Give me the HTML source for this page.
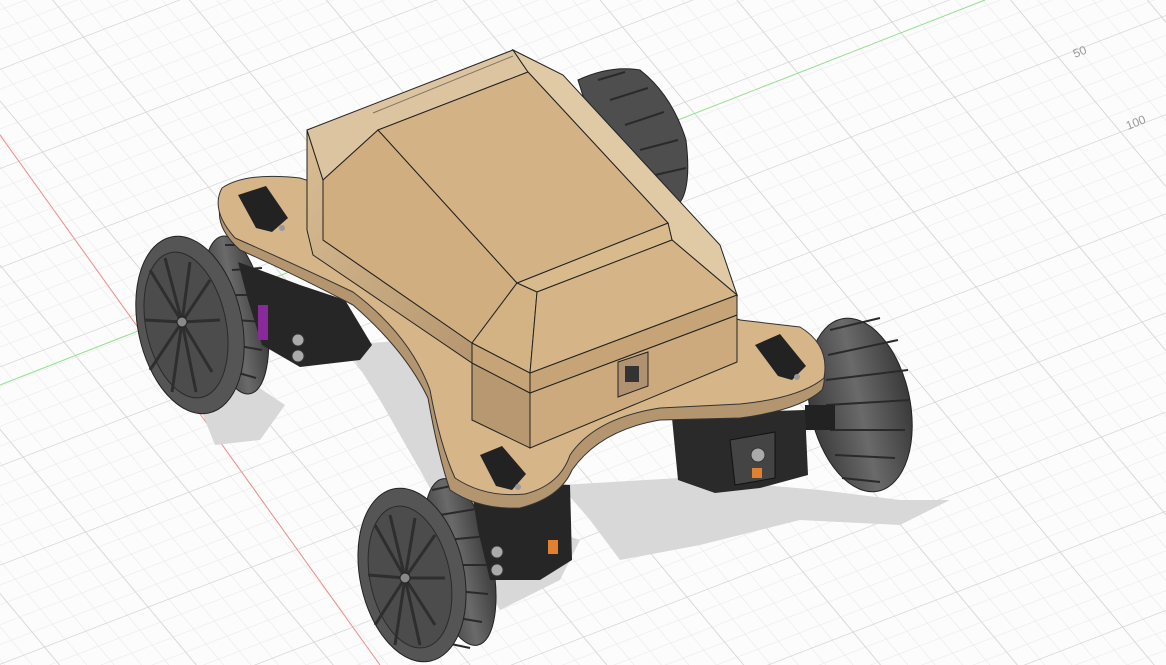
<!DOCTYPE html>
<html><head><style>html,body{margin:0;padding:0;background:#fafafa;overflow:hidden}svg{display:block}</style></head>
<body>
<svg width="1166" height="665" viewBox="0 0 1166 665" xmlns="http://www.w3.org/2000/svg">
<defs>
<pattern id="g" width="1" height="1" patternUnits="userSpaceOnUse" patternTransform="matrix(20.7 -8 12.5 15 913 212)">
<path d="M0 0H1M0 0V1" stroke="#e9e9e9" stroke-width="0.06" fill="none"/>
</pattern>
<pattern id="G" width="5" height="5" patternUnits="userSpaceOnUse" patternTransform="matrix(20.7 -8 12.5 15 913 212)">
<path d="M0 0H5M0 0V5" stroke="#d2d2d2" stroke-width="0.07" fill="none"/>
</pattern>
<linearGradient id="tire" x1="0" y1="0" x2="1" y2="0"><stop offset="0" stop-color="#3c3c3c"/><stop offset="0.5" stop-color="#6a6a6a"/><stop offset="1" stop-color="#3a3a3a"/></linearGradient>
<linearGradient id="lft" x1="0" y1="0" x2="1" y2="1"><stop offset="0" stop-color="#d9bd93"/><stop offset="1" stop-color="#b59670"/></linearGradient>
</defs>
<rect width="1166" height="665" fill="#fcfcfc"/>
<rect width="1166" height="665" fill="url(#g)"/>
<rect width="1166" height="665" fill="url(#G)"/>
<line x1="0" y1="385" x2="985" y2="0" stroke="#8fe08f" stroke-width="1"/>
<line x1="0" y1="135" x2="380" y2="665" stroke="#f08a8a" stroke-width="1"/>
<text x="1075" y="58" font-family="Liberation Sans,sans-serif" font-size="12" fill="#999" transform="rotate(-22 1075 58)">50</text>
<text x="1128" y="130" font-family="Liberation Sans,sans-serif" font-size="12" fill="#999" transform="rotate(-22 1128 130)">100</text>
<g fill="#d8d8d8">
<path d="M195 395 L255 385 L285 405 L260 440 L215 445 Z"/>
<path d="M345 345 L410 340 L440 420 L470 480 L520 520 L580 540 L560 580 L500 610 L470 560 L420 470 L380 400 Z"/>
<path d="M560 485 L680 478 L820 490 L900 500 L950 500 L900 525 L800 520 L700 545 L620 560 L590 520 Z"/>
</g>
<g>
<path d="M578 80 Q610 65 640 70 Q672 95 686 140 Q692 190 678 205 L600 150 Z" fill="#4e4e4e" stroke="#222"/>
<path d="M598 80 L625 72 M610 100 L648 88 M625 125 L664 112 M640 150 L678 140 M655 175 L686 168" stroke="#2a2a2a" stroke-width="2"/>
</g>
<g>
<ellipse cx="236" cy="315" rx="30" ry="80" fill="url(#tire)" stroke="#222" transform="rotate(-10 236 315)"/>
<path d="M225 245 L258 245 M232 270 L262 268 M236 295 L264 295 M236 320 L264 322 M234 345 L262 350 M228 370 L256 378" stroke="#2a2a2a" stroke-width="2"/>
<ellipse cx="190" cy="325" rx="52" ry="90" fill="#555" stroke="#222" transform="rotate(-12 190 325)"/>
<ellipse cx="186" cy="325" rx="40" ry="74" fill="#4c4c4c" stroke="#2a2a2a" transform="rotate(-12 186 325)"/>
<path d="M182 322 L150 270 M182 322 L165 258 M182 322 L190 262 M182 322 L210 280 M182 322 L220 320 M182 322 L212 372 M182 322 L196 392 M182 322 L172 392 M182 322 L150 370 M182 322 L145 320" stroke="#2e2e2e" stroke-width="3"/>
<circle cx="182" cy="322" r="5" fill="#888" stroke="#222"/>
</g>
<path d="M238 262 L300 285 L345 300 L372 345 L360 360 L300 367 L262 345 L248 300 Z" fill="#262626"/>
<rect x="258" y="305" width="10" height="35" fill="#8a2a9a"/>
<circle cx="298" cy="340" r="6" fill="#aaa" stroke="#333"/><circle cx="298" cy="356" r="6" fill="#aaa" stroke="#333"/>
<g>
<ellipse cx="860" cy="405" rx="50" ry="88" fill="url(#tire)" stroke="#222" transform="rotate(-12 860 405)"/>
<path d="M830 330 L880 318 M828 355 L898 340 M826 380 L908 370 M826 405 L910 400 M830 430 L905 430 M835 455 L895 458 M842 478 L880 482" stroke="#2a2a2a" stroke-width="2"/>
<rect x="805" y="405" width="30" height="25" fill="#222"/>
</g>
<path d="M672 418 L745 412 L805 410 L808 475 L760 488 L715 493 L678 480 Z" fill="#2a2a2a"/>
<path d="M730 440 L775 432 L775 478 L735 485 Z" fill="#444" stroke="#111"/>
<circle cx="758" cy="455" r="7" fill="#aaa" stroke="#333"/><rect x="752" y="468" width="10" height="10" fill="#e08030"/>
<g>
<ellipse cx="460" cy="562" rx="32" ry="85" fill="url(#tire)" stroke="#222" transform="rotate(-12 460 562)"/>
<path d="M432 490 L470 482 M440 515 L482 508 M446 540 L488 536 M448 565 L490 565 M446 590 L488 594 M440 615 L482 622 M432 640 L470 648" stroke="#2a2a2a" stroke-width="2"/>
<ellipse cx="412" cy="575" rx="52" ry="88" fill="#555" stroke="#222" transform="rotate(-12 412 575)"/>
<ellipse cx="410" cy="577" rx="40" ry="72" fill="#4c4c4c" stroke="#2a2a2a" transform="rotate(-12 410 577)"/>
<path d="M405 578 L375 525 M405 578 L390 515 M405 578 L415 518 M405 578 L435 535 M405 578 L445 578 M405 578 L435 625 M405 578 L420 645 M405 578 L395 645 M405 578 L375 625 M405 578 L368 575" stroke="#2e2e2e" stroke-width="3"/>
<circle cx="405" cy="578" r="5" fill="#888" stroke="#222"/>
</g>
<path d="M470 480 L570 485 L572 560 L540 580 L490 580 L478 530 Z" fill="#262626"/>
<circle cx="497" cy="552" r="6" fill="#aaa" stroke="#333"/><circle cx="497" cy="570" r="6" fill="#aaa" stroke="#333"/>
<rect x="548" y="540" width="10" height="14" fill="#e08030"/>
<path d="M300 190 Q245 183 222 200 Q212 225 240 250 Q290 272 353 305 Q405 350 428 398 Q438 455 450 490 Q480 510 520 508 Q560 498 572 470 Q600 430 660 420 L740 418 Q800 410 822 390 Q830 370 810 340 L740 320 Z" fill="#b39570" stroke="#333"/>
<path d="M300 178 Q245 172 222 188 Q210 210 235 238 Q290 262 353 292 Q410 335 430 390 Q440 445 455 478 Q485 498 525 494 Q560 485 570 455 Q595 418 660 408 L740 404 Q800 398 824 378 Q830 345 800 327 L740 320 Z" fill="#d6b689" stroke="#333"/>
<path d="M238 195 L266 186 L288 218 L272 232 L256 228 Z" fill="#222"/>
<circle cx="282" cy="228" r="3" fill="#999"/>
<path d="M480 455 L502 446 L526 474 L512 490 L496 486 Z" fill="#222"/>
<circle cx="518" cy="487" r="3" fill="#999"/>
<path d="M755 345 L780 334 L806 366 L792 380 L778 376 Z" fill="#222"/>
<circle cx="797" cy="377" r="3" fill="#999"/>
<path d="M472 363 L530 393 L530 448 L472 420 Z" fill="#b89870" stroke="#222"/>
<path d="M530 393 L737 315 L737 362 L530 448 Z" fill="#ccaa7d" stroke="#222"/>
<path d="M618 362 L648 352 L648 386 L618 397 Z" fill="#b09270" stroke="#222"/>
<rect x="625" y="366" width="14" height="16" fill="#333"/>
<path d="M472 343 L530 373 L737 295 L737 315 L530 393 L472 363 Z" fill="#c6a477" stroke="#222"/>
<path d="M530 373 L530 393" stroke="#222"/>
<path d="M307 130 L323 180 L323 240 L472 343 L472 363 L313 255 L307 230 Z" fill="url(#lft)" stroke="#222"/>
<path d="M307 130 L513 50 L528 72 L378 130 L323 180 Z" fill="#dcc4a0" stroke="#222"/>
<path d="M373 113 L513 56" stroke="#222" opacity="0.5"/>
<path d="M513 50 L563 75 L720 245 L737 295 L672 240 L668 223 L528 72 Z" fill="#e0caa6" stroke="#222"/>
<path d="M323 180 L378 130 L517 283 L472 343 L323 240 Z" fill="#d0ae7f" stroke="#222"/>
<path d="M517 283 L668 223 L672 240 L537 292 Z" fill="#d8ba8d" stroke="#222"/>
<path d="M378 130 L528 72 L668 223 L517 283 Z" fill="#d3b385" stroke="#222"/>
<path d="M472 343 L517 283 L537 292 L530 373 Z" fill="#d3b283" stroke="#222"/>
<path d="M537 292 L672 240 L737 295 L530 373 Z" fill="#d5b587" stroke="#222"/>
</svg>
</body></html>
